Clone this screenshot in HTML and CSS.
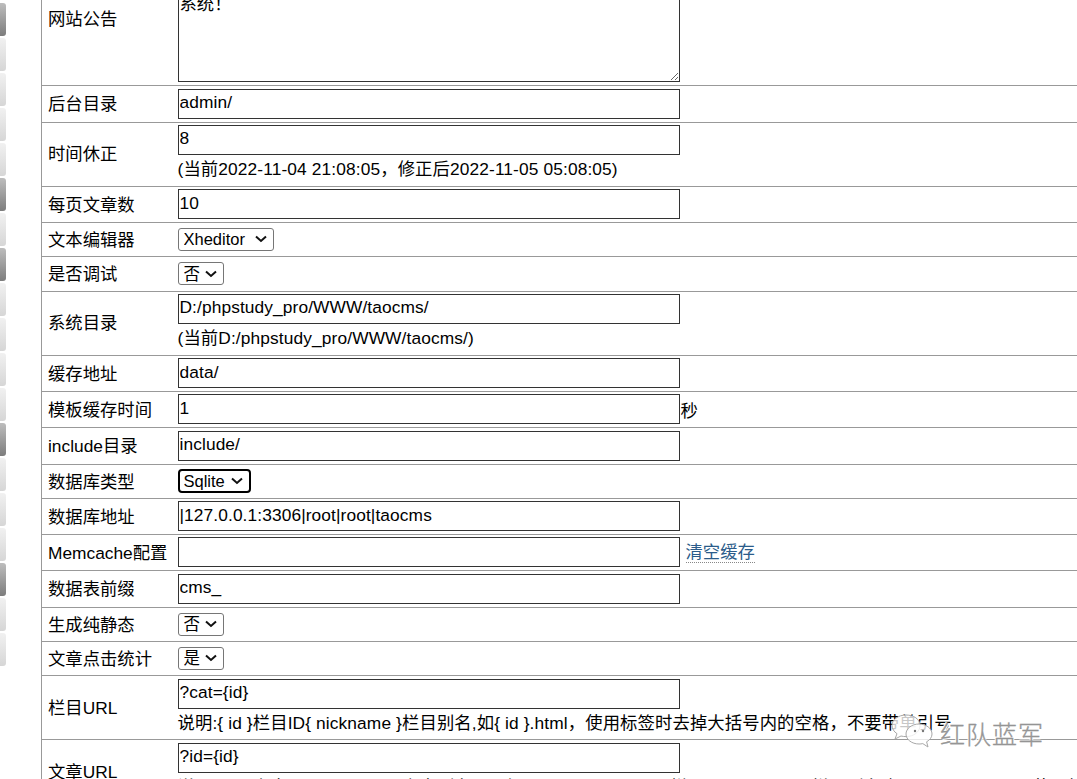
FILE: index.html
```html
<!DOCTYPE html>
<html lang="zh-CN">
<head>
<meta charset="utf-8">
<title>系统设置</title>
<link rel="stylesheet" href="styles.css">
</head>
<body>
<div class="page">
  <aside class="side">
    <span class="tab dark"></span><span class="tab"></span><span class="tab"></span><span class="tab"></span><span class="tab"></span>
    <span class="tab dark"></span><span class="tab"></span>
    <span class="tab dark"></span><span class="tab"></span><span class="tab"></span><span class="tab"></span><span class="tab"></span>
    <span class="tab dark"></span><span class="tab"></span><span class="tab"></span><span class="tab"></span>
    <span class="tab dark"></span><span class="tab"></span><span class="tab"></span>
  </aside>
  <table class="form">
    <tr class="r-notice"><th>网站公告</th><td><textarea class="area" spellcheck="false">涛涛CMS内容管理
简洁高效的内容管理
系统！</textarea></td></tr>
    <tr class="r-37"><th>后台目录</th><td><input class="box" value="admin/"></td></tr>
    <tr class="r-note"><th>时间休正</th><td><input class="box" value="8"><p class="note">(当前2022-11-04 21:08:05，修正后2022-11-05 05:08:05)</p></td></tr>
    <tr class="r-36"><th>每页文章数</th><td><input class="box" value="10"></td></tr>
    <tr class="r-34"><th>文本编辑器</th><td><select class="pick wide"><option>Xheditor</option></select></td></tr>
    <tr class="r-35"><th>是否调试</th><td><select class="pick"><option>否</option></select></td></tr>
    <tr class="r-note"><th>系统目录</th><td><input class="box" value="D:/phpstudy_pro/WWW/taocms/"><p class="note">(当前D:/phpstudy_pro/WWW/taocms/)</p></td></tr>
    <tr class="r-36"><th>缓存地址</th><td><input class="box" value="data/"></td></tr>
    <tr class="r-36"><th>模板缓存时间</th><td><input class="box" value="1"><span class="unit">秒</span></td></tr>
    <tr class="r-37"><th>include目录</th><td><input class="box" value="include/"></td></tr>
    <tr class="r-34"><th>数据库类型</th><td><select class="pick focus"><option>Sqlite</option></select></td></tr>
    <tr class="r-36"><th>数据库地址</th><td><input class="box" value="|127.0.0.1:3306|root|root|taocms"></td></tr>
    <tr class="r-36"><th>Memcache配置</th><td><input class="box" value=""><a class="clear">清空缓存</a></td></tr>
    <tr class="r-37"><th>数据表前缀</th><td><input class="box" value="cms_"></td></tr>
    <tr class="r-34"><th>生成纯静态</th><td><select class="pick"><option>否</option></select></td></tr>
    <tr class="r-34"><th>文章点击统计</th><td><select class="pick"><option>是</option></select></td></tr>
    <tr class="r-note r-url"><th>栏目URL</th><td><input class="box" value="?cat={id}"><p class="note">说明:{ id }栏目ID{ nickname }栏目别名,如{ id }.html，使用标签时去掉大括号内的空格，不要带单引号</p></td></tr>
    <tr class="r-note r-url"><th>文章URL</th><td><input class="box" value="?id={id}"><p class="note">说明:{ id }文章ID{ nickname }文章别名{ Y }年{ m }月{ d }日{ cat }栏目ID{ catname }栏目别名,如{ Y }/{ id }.html，使用标签时去掉大括号内的空格</p></td></tr>
  </table>
</div>
<div class="mark">
  <svg class="mark-icon" viewBox="0 0 44 36" width="44" height="36" aria-hidden="true">
    <path class="bubble" d="M16 2C8.3 2 2 6.700 2 12.500c0 3.300 2 6.200 5 8.200L5 26l6-3c1.600.4 3.300.6 5 .6 7.700 0 14-4.700 14-11.100S23.700 2 16 2z"/>
    <path class="bubble" d="M29 11c-7.200 0-13 4.500-13 10s5.800 10 13 10c1.300 0 2.600-.1 3.800-.4L38 34l-1.400-5.200C40 27 42 24.200 42 21c0-5.500-5.800-10-13-10z"/>
    <circle class="eye" cx="25" cy="18" r="1.200"/><circle class="eye" cx="33" cy="18" r="1.200"/>
  </svg>
  <span class="mark-text">红队蓝军</span>
</div>
</body>
</html>
```
FILE: styles.css
```css
* { box-sizing: border-box; }
html, body { margin: 0; height: 779px; overflow: hidden; background: #fff; }
body { font-family: "Liberation Sans", "Noto Sans CJK SC", sans-serif; font-size: 17.33px; color: #000; position: relative; }
.page { display: flex; align-items: flex-start; height: 779px; overflow: hidden; }
.side { width: 41px; flex: none; display: flex; flex-direction: column; gap: 2px; padding-top: 3px; }
.tab { display: block; width: 6px; height: 33px; flex: none; border-radius: 0 3px 3px 0; background: linear-gradient(#f1f1f1, #d6d6d6); }
.tab.dark { background: linear-gradient(#bdbdbd, #7d7d7d); }
.form { border-collapse: collapse; border-left: 1px solid #999; width: 1036px; flex: none; margin-top: -48px; table-layout: fixed; }
.form tr { border-bottom: 1px solid #999; }
.form th { width: 136px; padding: 0 0 2px 6px; font-weight: 400; text-align: left; white-space: nowrap; }
.form td { padding: 0; white-space: nowrap; }
.r-notice { height: 133px; }
.r-34 { height: 34px; }
.r-35 { height: 35px; }
.r-36 { height: 36px; }
.r-37 { height: 37px; }
.r-note { height: 64px; }
.form .r-note td { vertical-align: top; padding-top: 2px; }
.form .r-note th { padding-bottom: 3px; }
.form .r-url td { padding-top: 3px; }
.form .r-url th { padding-bottom: 1px; }
.box { display: inline-block; vertical-align: middle; width: 502px; height: 30px; border: 1px solid #333; border-radius: 0; padding: 0 1px 2px; margin: 0; font: inherit; letter-spacing: .1px; color: #000; background: #fff; outline: none; }
.area { display: block; width: 502px; height: 127px; border: 1px solid #333; border-radius: 0; padding: 1px; margin: 0; font: inherit; font-family: "Liberation Sans", "Noto Sans CJK TC", sans-serif; color: #000; background: #fff; line-height: 19px; }
.pick { display: block; height: 23px; font: inherit; font-size: 16.5px; color: #000; border: 1px solid #767676; border-radius: 3px; padding: 0 22px 0 5px; appearance: none; -webkit-appearance: none; background: #fff url("data:image/svg+xml,%3Csvg xmlns='http://www.w3.org/2000/svg' width='12' height='8' viewBox='0 0 12 8'%3E%3Cpath d='M1 1.500l5 4.500 5-4.500' fill='none' stroke='%23111' stroke-width='2'/%3E%3C/svg%3E") no-repeat right 6px center; }
.pick.wide { width: 96px; }
.pick.focus { height: 24px; padding: 0 23px 0 4px; border: 2px solid #000; border-radius: 4px; }
.note { margin: 2px 0 0; line-height: 24px; letter-spacing: .12px; color: #000; }
.unit { vertical-align: middle; margin-left: 1px; }
.clear { vertical-align: middle; margin-left: 6px; color: #2b5c8a; border-bottom: 1px dotted #888; line-height: 20px; display: inline-block; }
.mark { position: absolute; left: 890px; top: 713px; display: flex; align-items: flex-start; }
.mark-icon { display: block; flex: none; }
.bubble { fill: rgba(255, 255, 255, .78); stroke: #a8a8a8; stroke-width: 1; }
.eye { fill: #777; }
.mark-text { font-size: 25px; letter-spacing: 1px; color: #999; -webkit-text-stroke: 0.3px #8a8a8a; text-shadow: 0 0 2px #fff, 1px 1px 0 #fff, -1px -1px 0 #fff; font-family: "Noto Sans CJK SC", sans-serif; font-weight: 300; line-height: 36px; margin: 2px 0 0 6px; }
```
